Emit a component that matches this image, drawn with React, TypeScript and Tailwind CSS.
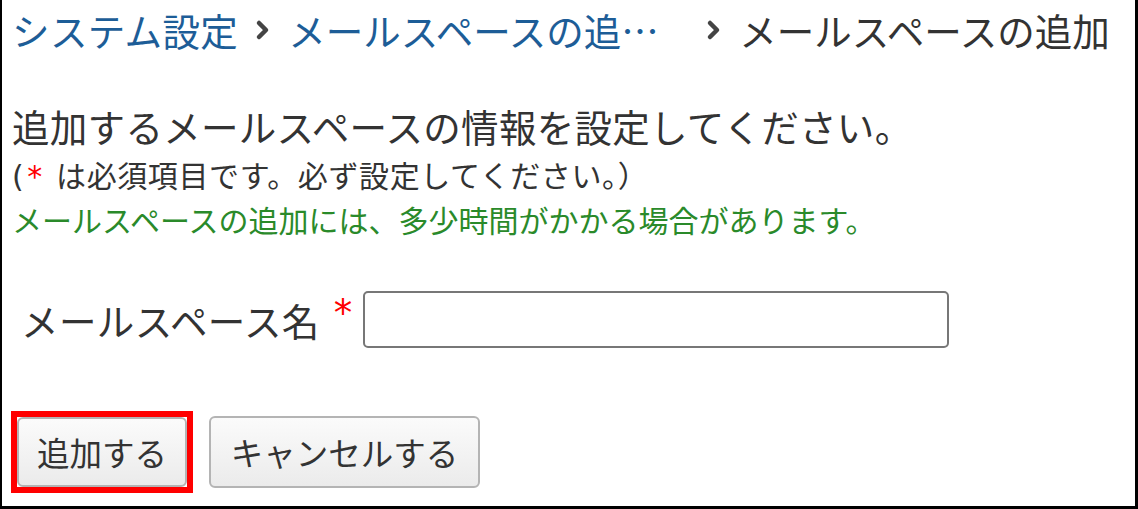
import React from "react";

const Chevron = () => (
  <svg width="18" height="24" viewBox="0 0 18 24" className="shrink-0">
    <polyline points="5,5 12,12 5,19" fill="none" stroke="#444" strokeWidth="4.5" strokeLinecap="round" strokeLinejoin="round" />
  </svg>
);

export default function App() {
  const font = { fontFamily: '"Noto Sans CJK JP", "Noto Sans", sans-serif' };
  const latin = { fontFamily: '"DejaVu Sans", "Noto Sans CJK JP", sans-serif' };
  return (
    <div
      className="w-[1138px] h-[509px] bg-white border-l-2 border-r-[3px] border-b-[3px] border-black overflow-hidden text-[#333]"
      style={font}
    >
      <div className="pl-[10px]">
        {/* breadcrumb */}
        <div className="h-[60px] flex items-center text-[37.5px] leading-[60px] whitespace-nowrap">
          <span className="text-[#1d5d97] tracking-[0.4px]">システム設定</span>
          <span className="mx-[16px] flex items-center"><Chevron /></span>
          <span className="text-[#1d5d97] w-[417px]">メールスペースの追…</span>
          <span className="mr-[16px] flex items-center"><Chevron /></span>
          <span className="text-[#333]">メールスペースの追加</span>
        </div>

        <div className="mt-[42px] text-[37.5px] leading-[48px] whitespace-nowrap tracking-[0.3px]">
          追加するメールスペースの情報を設定してください。
        </div>
        <div className="mt-[4px] text-[30px] leading-[40px] whitespace-nowrap tracking-[0.6px]">
          <span style={latin}>(</span>
          <span style={latin} className="text-[#ff0000] ml-[3px]">*</span>
          <span style={latin} className="mr-[3px]"> </span>は必須項目です。必ず設定してください。）
        </div>
        <div className="mt-[2px] text-[30px] leading-[40px] text-[#2a8a2a] whitespace-nowrap">
          メールスペースの追加には、多少時間がかかる場合があります。
        </div>

        <div className="mt-[52px] flex items-center h-[57px]">
          <span className="ml-[9px] text-[37.5px] leading-[57px] whitespace-nowrap tracking-[0.4px]">メールスペース名</span>
          <span style={latin} className="ml-[14px] text-[37px] leading-[57px] text-[#ff0000] self-start -mt-[6px]">*</span>
          <input
            type="text"
            className="ml-[11px] w-[586px] h-[57px] border-2 border-[#777] rounded-[5px] bg-white"
          />
        </div>

        <div className="mt-[63px] flex items-center">
          <div className="-ml-[1px] border-[6px] border-[#ff0000] p-0">
            <button className="w-[170px] h-[70px] rounded-[6px] border-2 border-[#b4b4b4] bg-gradient-to-b from-[#fbfbfb] to-[#ebebeb] text-[32.5px] leading-[66px] text-[#333]">
              追加する
            </button>
          </div>
          <button className="ml-[16px] w-[271px] h-[72px] rounded-[6px] border-2 border-[#b4b4b4] bg-gradient-to-b from-[#fbfbfb] to-[#ebebeb] text-[32.5px] leading-[68px] text-[#333]">
            キャンセルする
          </button>
        </div>
      </div>
    </div>
  );
}
